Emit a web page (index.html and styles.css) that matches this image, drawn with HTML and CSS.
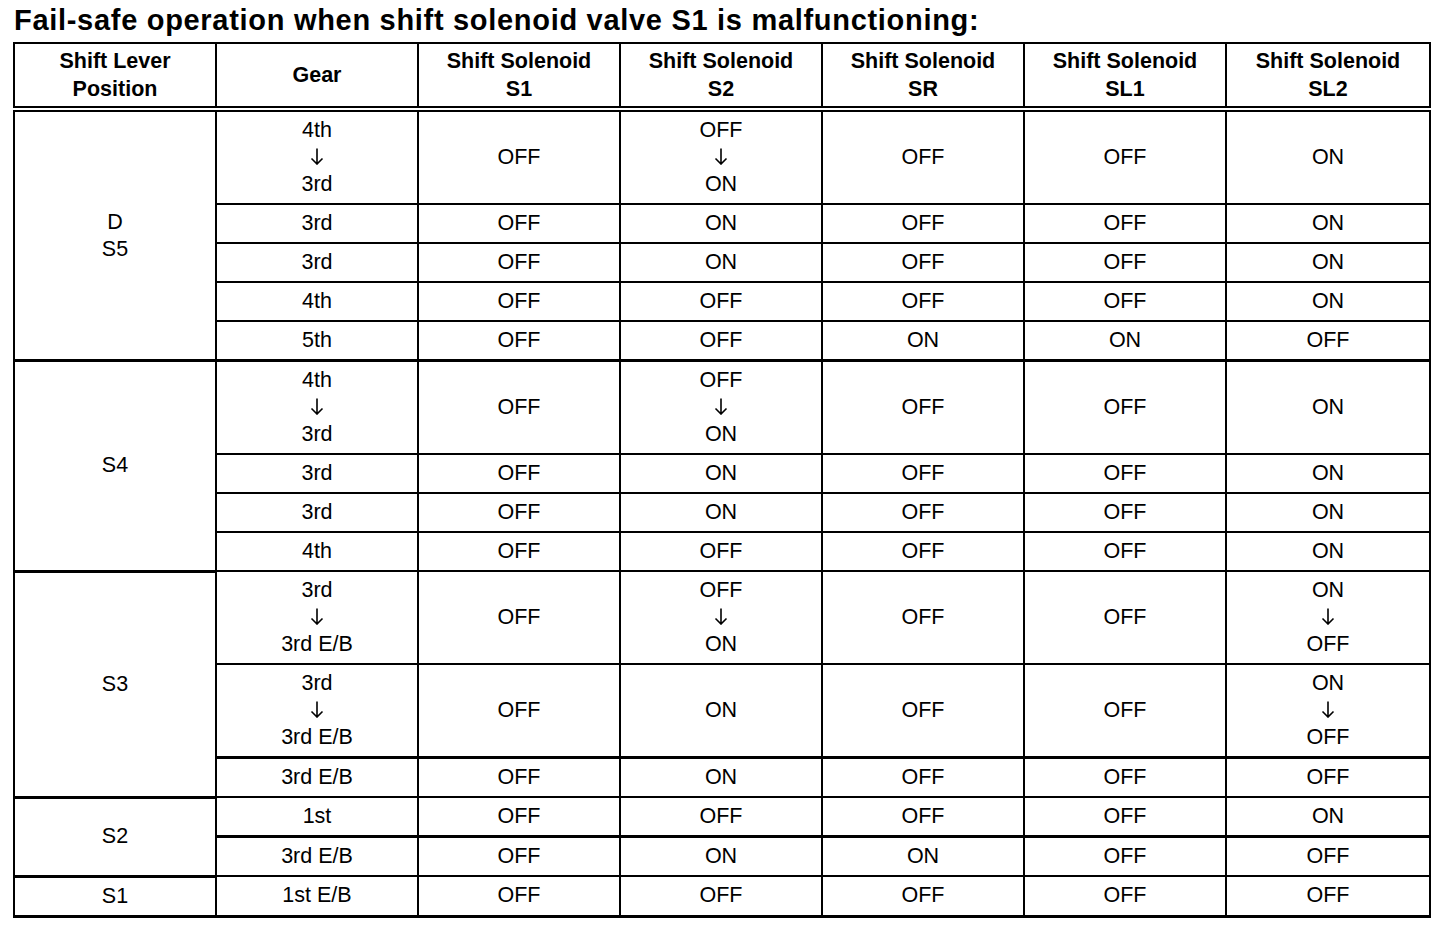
FILE: index.html
```html
<!DOCTYPE html>
<html lang="en">
<head>
<meta charset="utf-8">
<title>Fail-safe operation</title>
<link rel="stylesheet" href="styles.css">
</head>
<body>
<div class="page">
  <h1 class="title">Fail-safe operation when shift solenoid valve S1 is malfunctioning:</h1>
  <table class="grid">
    <colgroup>
      <col class="c"><col class="c"><col class="c"><col class="c"><col class="c"><col class="c"><col class="c-last">
    </colgroup>
    <thead>
      <tr>
        <th>Shift Lever<br>Position</th>
        <th>Gear</th>
        <th>Shift Solenoid<br>S1</th>
        <th>Shift Solenoid<br>S2</th>
        <th>Shift Solenoid<br>SR</th>
        <th>Shift Solenoid<br>SL1</th>
        <th>Shift Solenoid<br>SL2</th>
      </tr>
    </thead>
    <tbody>
      <tr>
        <td rowspan="5" class="pos">D<br>S5</td>
        <td>4th<br><span class="arr"><svg viewBox="0 0 14 17" width="14" height="17"><path d="M7 0.5V16M1.5 10.5L7 16L12.5 10.5" fill="none" stroke="#000" stroke-width="1.6"/></svg></span><br>3rd</td>
        <td>OFF</td>
        <td>OFF<br><span class="arr"><svg viewBox="0 0 14 17" width="14" height="17"><path d="M7 0.5V16M1.5 10.5L7 16L12.5 10.5" fill="none" stroke="#000" stroke-width="1.6"/></svg></span><br>ON</td>
        <td>OFF</td><td>OFF</td><td>ON</td>
      </tr>
      <tr><td>3rd</td><td>OFF</td><td>ON</td><td>OFF</td><td>OFF</td><td>ON</td></tr>
      <tr><td>3rd</td><td>OFF</td><td>ON</td><td>OFF</td><td>OFF</td><td>ON</td></tr>
      <tr><td>4th</td><td>OFF</td><td>OFF</td><td>OFF</td><td>OFF</td><td>ON</td></tr>
      <tr class="grp-end"><td>5th</td><td>OFF</td><td>OFF</td><td>ON</td><td>ON</td><td>OFF</td></tr>

      <tr>
        <td rowspan="4" class="pos">S4</td>
        <td>4th<br><span class="arr"><svg viewBox="0 0 14 17" width="14" height="17"><path d="M7 0.5V16M1.5 10.5L7 16L12.5 10.5" fill="none" stroke="#000" stroke-width="1.6"/></svg></span><br>3rd</td>
        <td>OFF</td>
        <td>OFF<br><span class="arr"><svg viewBox="0 0 14 17" width="14" height="17"><path d="M7 0.5V16M1.5 10.5L7 16L12.5 10.5" fill="none" stroke="#000" stroke-width="1.6"/></svg></span><br>ON</td>
        <td>OFF</td><td>OFF</td><td>ON</td>
      </tr>
      <tr><td>3rd</td><td>OFF</td><td>ON</td><td>OFF</td><td>OFF</td><td>ON</td></tr>
      <tr><td>3rd</td><td>OFF</td><td>ON</td><td>OFF</td><td>OFF</td><td>ON</td></tr>
      <tr><td>4th</td><td>OFF</td><td>OFF</td><td>OFF</td><td>OFF</td><td>ON</td></tr>

      <tr>
        <td rowspan="3" class="pos">S3</td>
        <td>3rd<br><span class="arr"><svg viewBox="0 0 14 17" width="14" height="17"><path d="M7 0.5V16M1.5 10.5L7 16L12.5 10.5" fill="none" stroke="#000" stroke-width="1.6"/></svg></span><br>3rd E/B</td>
        <td>OFF</td>
        <td>OFF<br><span class="arr"><svg viewBox="0 0 14 17" width="14" height="17"><path d="M7 0.5V16M1.5 10.5L7 16L12.5 10.5" fill="none" stroke="#000" stroke-width="1.6"/></svg></span><br>ON</td>
        <td>OFF</td><td>OFF</td>
        <td>ON<br><span class="arr"><svg viewBox="0 0 14 17" width="14" height="17"><path d="M7 0.5V16M1.5 10.5L7 16L12.5 10.5" fill="none" stroke="#000" stroke-width="1.6"/></svg></span><br>OFF</td>
      </tr>
      <tr class="thick">
        <td>3rd<br><span class="arr"><svg viewBox="0 0 14 17" width="14" height="17"><path d="M7 0.5V16M1.5 10.5L7 16L12.5 10.5" fill="none" stroke="#000" stroke-width="1.6"/></svg></span><br>3rd E/B</td>
        <td>OFF</td><td>ON</td><td>OFF</td><td>OFF</td>
        <td>ON<br><span class="arr"><svg viewBox="0 0 14 17" width="14" height="17"><path d="M7 0.5V16M1.5 10.5L7 16L12.5 10.5" fill="none" stroke="#000" stroke-width="1.6"/></svg></span><br>OFF</td>
      </tr>
      <tr><td>3rd E/B</td><td>OFF</td><td>ON</td><td>OFF</td><td>OFF</td><td>OFF</td></tr>

      <tr class="thick">
        <td rowspan="2" class="pos">S2</td>
        <td>1st</td><td>OFF</td><td>OFF</td><td>OFF</td><td>OFF</td><td>ON</td>
      </tr>
      <tr><td>3rd E/B</td><td>OFF</td><td>ON</td><td>ON</td><td>OFF</td><td>OFF</td></tr>

      <tr>
        <td class="pos">S1</td>
        <td>1st E/B</td><td>OFF</td><td>OFF</td><td>OFF</td><td>OFF</td><td>OFF</td>
      </tr>
    </tbody>
  </table>
</div>
</body>
</html>
```

FILE: styles.css
```css
html, body {
  margin: 0;
  padding: 0;
  background: #ffffff;
  color: #000000;
}

.page {
  padding: 0 0 0 13px;
  font-family: "Liberation Sans", Arial, sans-serif;
}

.title {
  margin: 0;
  padding: 4px 0 0 1px;
  font-size: 29px;
  font-weight: bold;
  line-height: 32px;
  height: 38px;
  letter-spacing: 0.7px;
  white-space: nowrap;
}

.grid {
  border-collapse: collapse;
  table-layout: fixed;
  width: 1418px;
  border: 2px solid #000;
  border-bottom-width: 3px;
}

.c { width: 202px; }
.c-last { width: 204px; }

.grid th,
.grid td {
  border: 2px solid #000;
  text-align: center;
  vertical-align: middle;
  padding: 5px 0;
  font-size: 21.5px;
  line-height: 27px;
}

.grid th {
  font-weight: bold;
  padding: 3px 0;
  line-height: 28px;
  border-bottom: 6px double #000;
}

.grid td {
  font-weight: normal;
}

.arr {
  display: inline-block;
  height: 27px;
  vertical-align: top;
}

.arr svg {
  display: block;
  margin-top: 4px;
}

.grid .grp-end td,
.grid td.pos {
  border-bottom-width: 3px;
}

.grid .thick td {
  border-bottom-width: 3px;
}
```
